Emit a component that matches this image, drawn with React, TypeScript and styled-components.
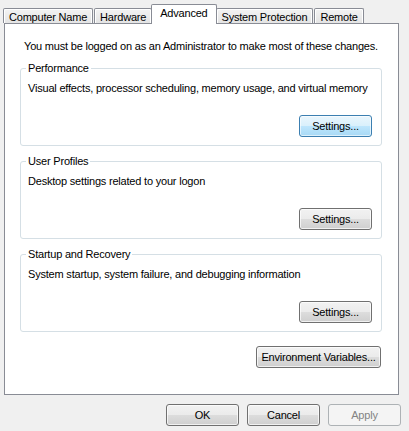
import React from "react";
import styled, { createGlobalStyle, css } from "styled-components";

const Global = createGlobalStyle`
  html, body { margin: 0; padding: 0; background: #f0f0f0; }
  body {
    font-family: "Liberation Sans", Arial, sans-serif;
    font-size: 11px;
    letter-spacing: -0.2px;
    color: #000;
  }
`;

const Window = styled.div`
  width: 409px;
  height: 431px;
  padding-top: 4px;
  box-sizing: border-box;
  background: #f0f0f0;
`;

const TabRow = styled.div`
  display: flex;
  align-items: flex-start;
  height: 20px;
  padding-left: 3px;
`;

const Tab = styled.div<{ $active?: boolean }>`
  box-sizing: border-box;
  display: flex;
  align-items: center;
  justify-content: center;
  border: 1px solid #898c95;
  border-bottom: none;
  border-radius: 2px 2px 0 0;
  white-space: nowrap;
  ${(p) =>
    p.$active
      ? css`
          position: relative;
          z-index: 1;
          height: 20px;
          margin: 0 -1px 0 -2px;
          padding: 0 8px 3px;
          background: #fff;
        `
      : css`
          height: 15px;
          margin-top: 4px;
          margin-right: 1px;
          padding: 1px 5px 0;
          background: linear-gradient(#f3f3f3, #e4e4e4);
          box-shadow: inset 1px 1px 0 #fff, inset -1px 0 0 #fff;
        `}
`;

const Panel = styled.div`
  position: relative;
  margin: -1px 0 0 4px;
  width: 395px;
  height: 372px;
  box-sizing: border-box;
  border: 1px solid #898c95;
  background: #fff;
  padding: 15px 16px 0 15px;
  display: flex;
  flex-direction: column;
`;

const Intro = styled.div`
  line-height: 14px;
  padding-left: 4px;
  margin-bottom: 8px;
  white-space: nowrap;
`;

const Group = styled.fieldset`
  box-sizing: border-box;
  height: 85px;
  margin: 0 0 8px;
  padding: 0 9px 0 7px;
  border: 1px solid #d5dfe5;
  border-radius: 3px;
  min-width: 0;
`;

const Legend = styled.legend`
  padding: 0 2px;
  margin-left: -2px;
  line-height: 14px;
`;

const Desc = styled.div`
  line-height: 14px;
  margin-top: 6px;
  white-space: nowrap;
`;

const ButtonRow = styled.div<{ $top?: number }>`
  display: flex;
  justify-content: flex-end;
  margin-top: ${(p) => p.$top ?? 0}px;
`;

const Button = styled.button<{ $variant?: "default" | "disabled"; $w?: number }>`
  box-sizing: border-box;
  width: ${(p) => p.$w ?? 73}px;
  height: 22px;
  padding: 0 4px;
  font-family: "Liberation Sans", Arial, sans-serif;
  font-size: 11px;
  letter-spacing: -0.2px;
  color: #000;
  border: 1px solid #707070;
  border-radius: 3px;
  background: linear-gradient(#f2f2f2 0%, #ebebeb 50%, #dddddd 50%, #cfcfcf 100%);
  box-shadow: inset 0 0 0 1px rgba(255, 255, 255, 0.7);
  white-space: nowrap;
  ${(p) =>
    p.$variant === "default" &&
    css`
      border-color: #3c7fb1;
      background: linear-gradient(#eaf6fd 0%, #d9f0fc 50%, #bee6fd 50%, #a7d9f5 100%);
      box-shadow: inset 0 0 0 1px rgba(255, 255, 255, 0.6);
    `}
  ${(p) =>
    p.$variant === "disabled" &&
    css`
      border-color: #adb2b5;
      background: #f4f4f4;
      color: #838383;
      box-shadow: none;
    `}
`;

const EnvRow = styled.div`
  display: flex;
  justify-content: flex-end;
  margin-top: 6px;
  padding-right: 1px;
`;

const Footer = styled.div`
  display: flex;
  justify-content: flex-end;
  gap: 8px;
  padding: 9px 8px 0 0;
`;

const groups = [
  {
    title: "Performance",
    desc: "Visual effects, processor scheduling, memory usage, and virtual memory",
    def: true,
  },
  { title: "User Profiles", desc: "Desktop settings related to your logon" },
  {
    title: "Startup and Recovery",
    desc: "System startup, system failure, and debugging information",
  },
];

const tabs = ["Computer Name", "Hardware", "Advanced", "System Protection", "Remote"];

export default function App() {
  return (
    <>
      <Global />
      <Window>
        <TabRow>
          {tabs.map((t) => (
            <Tab key={t} $active={t === "Advanced"}>
              {t}
            </Tab>
          ))}
        </TabRow>
        <Panel>
          <Intro>You must be logged on as an Administrator to make most of these changes.</Intro>
          {groups.map((g) => (
            <Group key={g.title}>
              <Legend>{g.title}</Legend>
              <Desc>{g.desc}</Desc>
              <ButtonRow $top={20}>
                <Button $variant={g.def ? "default" : undefined}>Settings...</Button>
              </ButtonRow>
            </Group>
          ))}
          <EnvRow>
            <Button $w={125}>Environment Variables...</Button>
          </EnvRow>
        </Panel>
        <Footer>
          <Button>OK</Button>
          <Button>Cancel</Button>
          <Button $variant="disabled">Apply</Button>
        </Footer>
      </Window>
    </>
  );
}
